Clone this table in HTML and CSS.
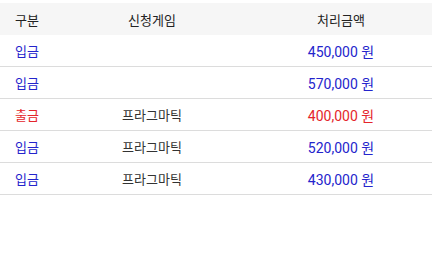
FILE: index.html
```html
<!DOCTYPE html>
<html lang="ko">
<head>
<meta charset="utf-8">
<link rel="stylesheet" href="styles.css">
</head>
<body>
<table class="tbl">
  <colgroup>
    <col class="c1"><col class="c2"><col class="c3">
  </colgroup>
  <thead>
    <tr><th>구분</th><th>신청게임</th><th>처리금액</th></tr>
  </thead>
  <tbody>
    <tr class="in"><td>입금</td><td></td><td class="amt">450,000 원</td></tr>
    <tr class="in"><td>입금</td><td></td><td class="amt">570,000 원</td></tr>
    <tr class="out"><td>출금</td><td class="game">프라그마틱</td><td class="amt">400,000 원</td></tr>
    <tr class="in"><td>입금</td><td class="game">프라그마틱</td><td class="amt">520,000 원</td></tr>
    <tr class="in"><td>입금</td><td class="game">프라그마틱</td><td class="amt">430,000 원</td></tr>
  </tbody>
</table>
</body>
</html>
```
FILE: styles.css
```css
html, body { margin: 0; padding: 0; background: #fff; }
body { padding-top: 3px; font-family: "Noto Sans CJK KR", "Noto Sans", sans-serif; font-size: 13px; color: #222; }
.tbl { width: 432px; border-collapse: collapse; table-layout: fixed; }
.c1 { width: 54px; }
.c2 { width: 196px; }
.c3 { width: 182px; }
th { background: #f6f6f6; height: 32px; font-weight: 400; padding: 0; text-align: center; color: #222; }
td { height: 31px; padding: 0; text-align: center; border-bottom: 1px solid #dcdcdc; }
.in td { color: #2424cc; }
.out td { color: #e4252b; }
.tbl td.game { color: #333; }
.tbl td.amt { font-family: Roboto, "Noto Sans CJK KR", sans-serif; font-size: 14px; }
```
